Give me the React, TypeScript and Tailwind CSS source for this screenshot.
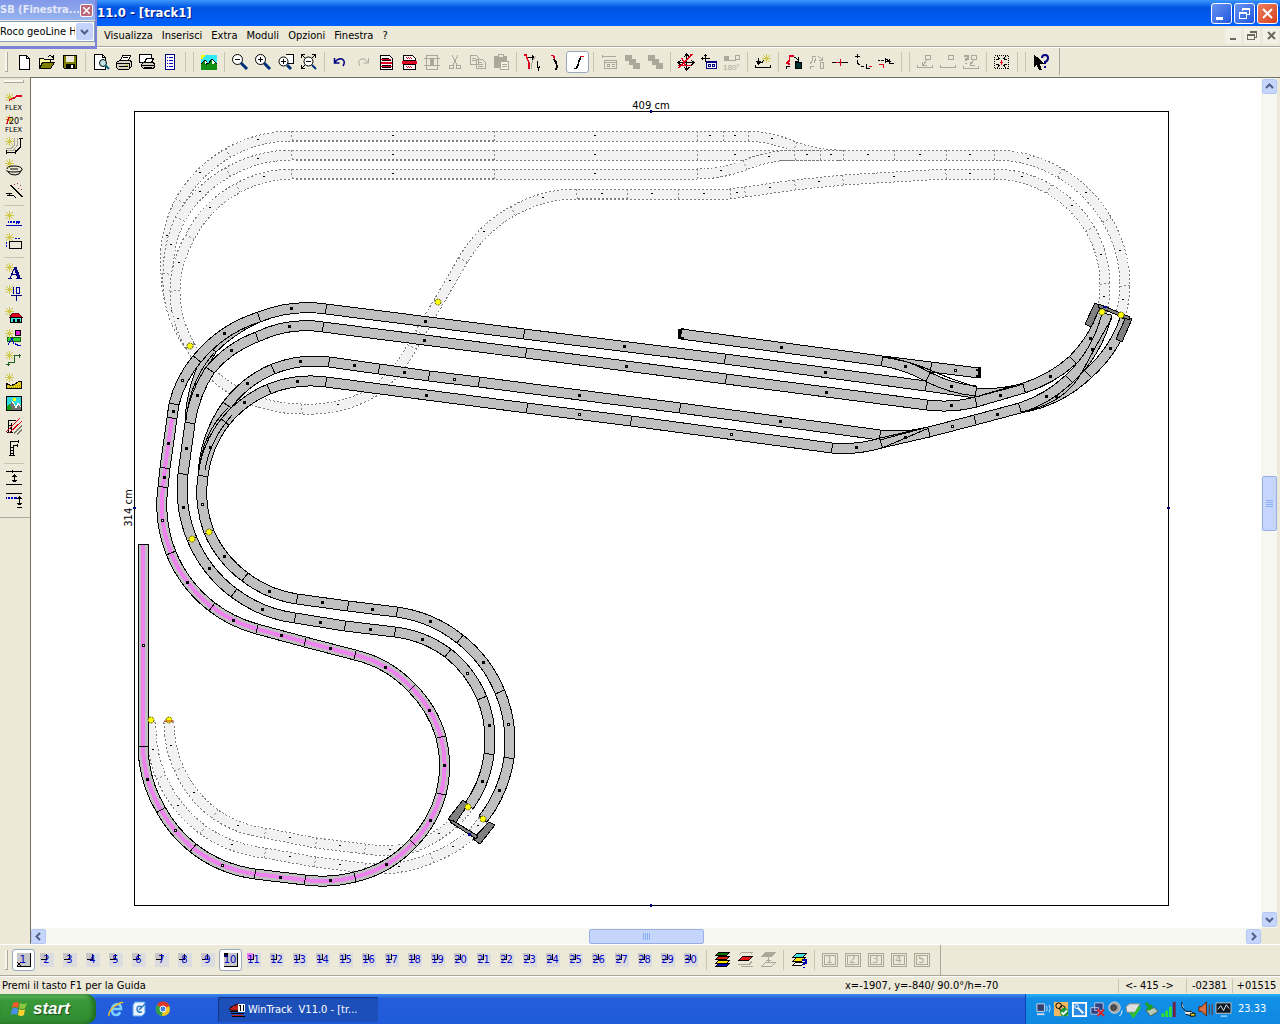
import { FC, ReactNode } from "react";

// One piece of track: end point and radius (0 = straight, + = clockwise, - = counter clockwise),
// a trailing 1 marks a piece whose centre is drawn hollow
type Piece = [number, number, number, number?];

interface Track {
    kind: "ghost" | "rail" | "pink",
    start: [number, number],
    pieces: Piece[]
}

interface Tool {
    name: string,
    icon: ReactNode,
    active?: boolean
}

const tracks: Track[] = [
    // hidden tracks, upper level
    { kind: "ghost", start: [190, 346], pieces: [[166, 274, 131], [180, 201, 131], [228, 153, 131], [292, 136, 131], [494, 136, 0], [697, 136, 0], [723, 136, 0], [748, 136, 0], [795, 147, 131], [843, 155, -131]] },
    { kind: "ghost", start: [190, 346], pieces: [[168, 274, 110], [180, 219, 131], [228, 172, 131], [292, 155, 131], [494, 155, 0], [697, 155, 0], [773, 155, 0], [820, 155, 0], [843, 155, 0], [894, 155, 0], [946, 155, 0], [994, 155, 0], [1060, 173, 131], [1107, 220, 131], [1125, 286, 131], [1121, 314, 131]] },
    { kind: "ghost", start: [190, 346], pieces: [[175, 291, 112], [190, 237, 112], [238, 188, 112], [292, 174, 112], [494, 174, 0], [697, 174, 0], [745, 165, -131], [795, 155, 131], [820, 155, 0]] },
    { kind: "ghost", start: [190, 346], pieces: [[208, 370, -130], [302, 409, -130], [372, 393, -130], [412, 347, -130], [420, 333, 0], [438, 303, 0], [463, 260, 0], [513, 211, 131], [577, 194, 131], [627, 194, 0], [678, 194, 0], [730, 194, 0], [745, 192, 0], [795, 185, 0], [843, 180, 0], [946, 174, 0], [994, 174, 0], [1049, 189, 111], [1090, 229, 111], [1105, 284, 111], [1102, 311, 111]] },
    // hidden tracks, lower level
    { kind: "ghost", start: [169, 722], pieces: [[179, 769, -112], [215, 814, -112], [265, 833, -112], [316, 843, 0], [365, 849, 0], [415, 847, -131], [460, 817, -131], [469, 806, -131]] },
    { kind: "ghost", start: [151, 722], pieces: [[161, 777, -131], [203, 830, -131], [265, 853, -131], [315, 862, 0], [365, 868, 0], [432, 858, -131], [473, 833, -131], [483, 820, -131]] },
    // station
    { kind: "rail", start: [190, 423], pieces: [[212, 349, 150], [259, 317, 150]] },
    { kind: "rail", start: [172, 418], pieces: [[174, 404, 0], [197, 359, 112, 1], [259, 317, 131], [326, 309, 131], [524, 334, 0], [725, 359, 0], [926, 386, 0], [975, 393, 0], [1024, 388, -131]] },
    { kind: "rail", start: [681, 334], pieces: [[882, 361, 0], [931, 367, 0], [979, 373, 0, 1]] },
    { kind: "rail", start: [882, 361], pieces: [[928, 377, 131], [976, 391, -131]] },
    { kind: "rail", start: [469, 806], pieces: [[489, 754, -112], [482, 698, -112], [448, 653, -112, 1], [395, 632, -112], [345, 626, 0], [295, 618, 0], [234, 593, 131], [192, 539, 131], [183, 474, 131], [190, 423, 0], [210, 370, 131], [257, 337, 112], [323, 327, 112], [526, 353, 0], [726, 379, 0], [927, 405, 0], [976, 402, -131], [1024, 388, 0], [1073, 360, -131], [1103, 313, -131]] },
    { kind: "rail", start: [203, 476], pieces: [[227, 405, 131], [273, 369, 112], [329, 362, 112], [379, 369, 0], [429, 376, 0], [479, 382, 0, 1], [680, 408, 0], [880, 435, 0], [928, 432, -131]] },
    { kind: "rail", start: [483, 819], pieces: [[509, 758, -131], [500, 692, -131, 1], [460, 639, -131], [397, 612, -131], [348, 606, 0], [297, 599, 0], [245, 577, 112], [209, 532, 112], [203, 476, 112, 1], [225, 422, 112], [269, 389, 112], [326, 382, 112], [527, 408, 0], [631, 421, 0, 1], [832, 448, 0, 1], [881, 443, -131], [929, 432, 0], [975, 420, 0, 1], [1020, 408, 0], [1088, 374, -131], [1125, 319, -131]] },
    { kind: "rail", start: [1020, 408], pieces: [[1069, 379, -131], [1107, 314, -131]] },
    // highlighted layer
    { kind: "pink", start: [143, 544], pieces: [[143, 746, 0, 1], [161, 810, -129], [193, 848, -129, 1], [255, 874, -129, 1], [305, 880, 0], [355, 877, -131], [413, 843, -114], [441, 794, -114], [441, 737, -114], [412, 688, -114], [355, 655, -114], [305, 642, 0], [257, 629, 0], [212, 607, 131], [171, 553, 131], [163, 487, 131, 1], [165, 468, 0], [172, 418, 0]] }
]

const markers = [[190, 346], [438, 302], [192, 539], [209, 532], [151, 720], [169, 720], [468, 807], [483, 819], [1102, 312], [1121, 315]]

const trackGeometry = (track: Track) => {
    let [x, y] = track.start;
    let d = `M${x} ${y}`;
    let ticks = "";
    const dots: { x: number, y: number, hollow: boolean }[] = [];

    track.pieces.forEach(([nx, ny, r, hollow], i) => {
        const chord = Math.hypot(nx - x, ny - y);
        const dir = Math.atan2(ny - y, nx - x);
        const half = r === 0 ? 0 : Math.asin(chord / 2 / r);
        const sag = r === 0 ? 0 : r * (1 - Math.cos(half));
        d += r === 0 ? `L${nx} ${ny}` : `A${Math.abs(r)} ${Math.abs(r)} 0 0 ${r > 0 ? 1 : 0} ${nx} ${ny}`;

        const tick = (px: number, py: number, a: number) => {
            const dx = -Math.sin(a) * 5;
            const dy = Math.cos(a) * 5;
            ticks += `M${px - dx} ${py - dy}L${px + dx} ${py + dy}`;
        }
        if (i === 0) tick(x, y, dir - half);
        tick(nx, ny, dir + half);
        dots.push({
            x: Math.floor((x + nx) / 2 + Math.sin(dir) * sag),
            y: Math.floor((y + ny) / 2 - Math.cos(dir) * sag),
            hollow: hollow === 1
        });
        x = nx;
        y = ny;
    });
    return { d, ticks, dots };
}

const TrackShape: FC<{ track: Track }> = ({ track }) => {
    const { d, ticks, dots } = trackGeometry(track);
    const ghost = track.kind === "ghost";
    return (
        <g fill="none" shapeRendering="crispEdges">
            <path d={d} stroke={ghost ? "#7c7c7c" : "#000"} strokeWidth="11" strokeDasharray={ghost ? "2 2" : undefined} />
            <path d={d} stroke={ghost ? "#f2f2f2" : "#c0c0c0"} strokeWidth="9" />
            {track.kind === "pink" && <path d={d} stroke="#ee82ee" strokeWidth="4" />}
            <path d={ticks} stroke={ghost ? "#8c8c8c" : "#000"} strokeDasharray={ghost ? "2 2" : undefined} />
            {
                dots.map((dot, id) => (
                    <g key={id}>
                        <rect x={dot.x - 1} y={dot.y - 1} width={ghost ? 2 : 3} height={ghost ? 1 : 3} fill="#000" />
                        {dot.hollow && <rect x={dot.x} y={dot.y} width="1" height="1" fill="#fff" />}
                    </g>
                ))
            }
        </g>
    );
}

const Plan = () => (
    <svg viewBox="31 78 1230 850" className="block w-full h-auto" role="img" aria-label="track1">
        <g shapeRendering="crispEdges">
            <rect x="134.5" y="111.5" width="1034" height="794" fill="none" stroke="#000" />
            <path d="M650 110h2v3h-2zM650 904h2v3h-2zM1167 507h3v2h-3zM133 507h3v2h-3z" fill="#000080" />
        </g>
        <text x="651" y="109" textAnchor="middle" className="text-[10px] font-['DejaVu_Sans',sans-serif]">409 cm</text>
        <text transform="translate(132 508) rotate(-90)" textAnchor="middle" className="text-[10px] font-['DejaVu_Sans',sans-serif]">314 cm</text>
        {tracks.map((track, id) => <TrackShape track={track} key={id} />)}
        {/* turnout blades */}
        <g fill="none" stroke="#000" shapeRendering="crispEdges">
            <path d="M882 357Q910 361 930 370T976 387M976 397L1024 384M880 440L928 427M882 448L929 428" />
            <path d="M199 470Q203 432 228 408M205 470Q210 440 232 415M186 420Q190 380 214 353M1021 412Q1065 404 1082 372T1112 318" />
        </g>
        {/* bumpers */}
        <path d="M678 329h3v10h-3zM681 328h3v2h-3zM681 337h3v2h-3zM978 367h3v11h-3zM976 369h2v2h-2zM976 375h2v2h-2z" fill="#000" shapeRendering="crispEdges" />
        {/* tunnel portals */}
        <g fill="#808080" stroke="#000" shapeRendering="crispEdges">
            <path d="M1095 303L1101 306L1091 327L1085 324ZM1126 317L1132 319L1122 342L1116 339Z" />
            <path d="M1099 304L1130 317L1129 320L1098 307Z" />
            <path d="M463 800L468 804L455 824L448 819ZM489 822L495 825L480 844L473 839Z" />
            <path d="M452 820L478 836L476 839L450 822Z" />
        </g>
        <path d="M1103 306h4v2h-4zM468 833h3v3h-3z" fill="#000080" />
        {
            markers.map(([x, y], id) => (
                <circle key={id} cx={x} cy={y} r="3" fill="#ffff00" stroke="#5a5a00" strokeDasharray="2 1" />
            ))
        }
        <path d="M164 721h10" stroke="#c03000" />
    </svg>
)

const Glyph: FC<{ children?: ReactNode }> = ({ children }) => (
    <svg width="18" height="18" viewBox="0 0 18 18" fill="none" stroke="#000" shapeRendering="crispEdges" aria-hidden="true">{children}</svg>
)

const Spark = () => <path d="M4.500 0v9M0 4.500h9M1 1l7 7M8 1l-7 7" stroke="#cfc64c" />

const gray = "#aca899";

const magnifier = <><circle cx="6.500" cy="6.500" r="5" fill="#fff" shapeRendering="auto" /><path d="M10 10l6 6" stroke="#00307c" strokeWidth="3" shapeRendering="auto" /></>

const toolGroups: Tool[][] = [
    [
        { name: "Nuovo", icon: <path d="M4.500 2.500h7l3 3v11h-10zM11.500 2.500v3h3" fill="#fff" /> },
        { name: "Apri", icon: <><path d="M1.500 14.500v-9h4l1 1h6v3" fill="#ffffa0" /><path d="M1.500 15.500l3-6h12l-4 6z" fill="#808000" /><path d="M10 4q3-3 5 1M15 2v4h-4" /></> },
        { name: "Salva", icon: <><path d="M2.500 2.500h13v13h-12l-1-1z" fill="#808000" /><path d="M5 3h8v6H5z" fill="#ece9d8" stroke="none" /><path d="M5 11h8v4H5z" fill="#000" /><path d="M10 12h2v3h-2z" fill="#fff" stroke="none" /></> }
    ],
    [
        { name: "Anteprima", icon: <><path d="M2.500 1.500h8l3 3v12h-11zM10.500 1.500v3h3" fill="#fff" /><circle cx="11" cy="10" r="3.500" fill="#bfe6e6" shapeRendering="auto" /><path d="M13 12l4 4" stroke="#006080" strokeWidth="2" shapeRendering="auto" /></> },
        { name: "Stampa", icon: <><path d="M5.500 7.500l2-5h8l-2 5" fill="#fff" /><path d="M1.500 9.500l3-2h11l1 2v4l-3 3h-10l-2-2z" fill="#d6d3c4" /><path d="M2 10.500h12M4 13.500h9M14 10v6M8 4.500h5" /><path d="M11 12h2" stroke="#c0c000" /></> },
        { name: "Stampa vista", icon: <><path d="M1.500 1.500h12v8h-12z" fill="#fff" /><path d="M8.500 5.500h7l-2 4h-7z" fill="#fff" /><path d="M5.500 9.500h10l1 2v3l-2 1h-9l-2-2v-2z" fill="#d6d3c4" /><path d="M4 12.500h12M6 14.500h8" /></> },
        { name: "Lista", icon: <><path d="M4.500 1.500h9v15h-9z" fill="#fff" stroke="#000080" /><path d="M6 4.500h1M8 4.500h4M6 7.500h1M8 7.500h4M6 10.500h1M8 10.500h4M6 13.500h1M8 13.500h4" stroke="#0000c0" /></> }
    ],
    [],
    [
        { name: "Paesaggio", icon: <><path d="M1 2h16v10H1z" fill="#30e8f8" stroke="none" /><path d="M1 11l4-3 3 2 4-4 5 5v6H1z" fill="#109010" stroke="none" /><path d="M1 11l4-4 3 4 4-5 5 5M5 7l2 5M12 6l1 5" /><path d="M5 8l2 2-2 1zM12 7l3 3-3 1z" fill="#fff" stroke="none" /><path d="M1 2h4v2H3v2H1z" fill="#ff0" stroke="none" /></> }
    ],
    [
        { name: "Zoom indietro", icon: <>{magnifier}<path d="M4 6.500h5" /></> },
        { name: "Zoom avanti", icon: <>{magnifier}<path d="M4 6.500h5M6.500 4v5" /></> },
        { name: "Zoom finestra", icon: <><path d="M8.500 1.500h8v9h-8" fill="#fff" /><circle cx="6.500" cy="8.500" r="4.500" fill="#fff" shapeRendering="auto" /><path d="M4 8.500h5M6.500 6v5" /><path d="M10 12l4 4" stroke="#00307c" strokeWidth="3" shapeRendering="auto" /></> },
        { name: "Zoom tutto", icon: <><path d="M1.500 5V1.500h3M12 1.500h3.500V5M1.500 12v3.500h3M2 2l3 3M15 2l-3 3M2 15l3-3" /><circle cx="8.500" cy="8.500" r="4.500" fill="#fff" shapeRendering="auto" /><path d="M6 8.500h5" /><path d="M12 12l4 4" stroke="#00307c" strokeWidth="2" shapeRendering="auto" /></> }
    ],
    [
        { name: "Annulla", icon: <path d="M3.500 5v5h5M4 9q3-4 7-3 4 2 1 7" stroke="#000080" shapeRendering="auto" strokeWidth="1.500" /> },
        { name: "Ripristina", icon: <path d="M14.500 5v5h-5M14 9q-3-4-7-3-4 2-1 7" stroke={gray} shapeRendering="auto" /> },
        { name: "Elimina", icon: <><path d="M3.500 2.500h9l3 3v11h-12z" fill="#fff" /><path d="M5 5.500h7M5 7.500h9M5 12.500h9M5 14.500h9" /><path d="M4 9h11v2H4z" fill="#e00020" stroke="none" /><path d="M4 6.500h10M4 13.500h11" stroke="#e00020" /></> },
        { name: "Dividi", icon: <><path d="M3.500 2.500h9l3 3v11h-12z" fill="#fff" /><path d="M6 4h5M7 5.500h5M6 13h6M7 14.500h5" strokeDasharray="1 1" stroke="#e00020" /><path d="M2 9.500h15" stroke="#e00020" strokeWidth="3" /><path d="M4 7.500h11M4 11.500h11" /></> },
        { name: "Unisci", icon: <><path d="M3.500 2.500h11v14h-11zM1 5.500h16M1 12.500h16" stroke={gray} /><path d="M7 6h4v6H7z" fill={gray} stroke="none" /></> },
        { name: "Taglia", icon: <path d="M6 2l5 10M12 2L7 12M3.500 12.500h4v3h-4zM10.500 12.500h4v3h-4z" stroke={gray} /> },
        { name: "Copia", icon: <path d="M1.500 2.500h6l2 2v7h-8zM7.500 6.500h6l3 3v6h-9zM3 5.500h4M3 7.500h4M9 9.500h4M9 11.500h5M9 13.500h5" stroke={gray} /> },
        { name: "Incolla", icon: <><path d="M2 3h13v12H2z" fill={gray} stroke="none" /><path d="M6 1.500h5v3H6z" fill="#ece9d8" stroke={gray} /><path d="M8.500 8.500h8v8h-8zM10 11.500h5M10 13.500h5" fill="#f4f2e6" stroke={gray} /></> }
    ],
    [
        { name: "Binario flessibile", icon: <><path d="M1 2h2l1 3 2 5v6" stroke="#e00020" strokeWidth="1.500" /><path d="M5 4.500h6M9 2.500l2 2-2 2M14.500 8v5l1 3 1-3" /><path d="M13 3q-5 5-5 13" stroke={gray} /></> },
        { name: "Curva", icon: <><path d="M5 2.500h2l2 3" stroke="#e00020" strokeWidth="1.500" /><path d="M8 6q4 5 2 11" strokeWidth="2" /></> },
        { name: "Curva di raccordo", active: true, icon: <><path d="M5 15.500h2l2-3 1-5 2-3" strokeWidth="1.500" /><path d="M11 3.500h4" stroke="#e00020" strokeWidth="1.500" /></> }
    ],
    [
        { name: "Etichetta", icon: <path d="M2.500 2v3M2 3.500h14M4.500 7.500h12v8h-12zM5 9.500h11M7.500 11.500h2v2h-2zM12 11.500h3M12 13.500h3" stroke={gray} /> },
        { name: "Porta avanti", icon: <path d="M2 2h6v5H2zM6 6h6v5H6zM10 10h6v5h-6z" fill={gray} stroke={gray} /> },
        { name: "Porta indietro", icon: <path d="M2 2h6v5H2zM6 6h6v5H6zM10 10h6v5h-6z" fill={gray} stroke={gray} /> }
    ],
    [
        { name: "Sposta", icon: <><path d="M1 9.500h16M9.500 2v14M4 7l-3 2.500 3 3M14 7l3 2.500-3 3M7 4l2.500-3 3 3M7 14l2.500 3 3-3" /><path d="M1 12.500h13M2 15L15 1M5 5l3 7" stroke="#e00020" strokeWidth="1.500" /></> },
        { name: "Sposta testo", icon: <><path d="M1 5.500h9M5.500 1v8M2.500 4v3M4 2.500h3" /><path d="M6.500 8.500h10v7h-10z" fill="#fff" stroke="#000080" /><path d="M7 9.500h9" stroke="#000080" /><path d="M8.500 11.500h2v2h-2zM12.500 11.500h2v2h-2z" stroke="#000080" /></> },
        { name: "Ruota 180", icon: <><path d="M1 3h4v4H1z" fill={gray} stroke={gray} /><path d="M6 7.500h6v-5h4v4h-4" stroke={gray} /><text x="0" y="17" fill={gray} stroke="none" className="text-[8px] font-['Liberation_Sans',sans-serif]">180°</text></> }
    ],
    [
        { name: "Altezza", icon: <><path d="M1.500 12v2.500h15V12M4.500 5v5" /><path d="M2 8h5l-2.500 3z" fill="#000" /><path d="M6 9.500h2l2-2" /><path d="M12.500 1v9M8 5.500h9M9 2l7 7M16 2l-7 7" stroke="#cfc64c" /></> }
    ],
    [
        { name: "Inserisci tratto", icon: <><path d="M2 11l2-3 1-5h4M2 9l3 3" stroke="#e00020" strokeWidth="1.500" /><path d="M10.500 9.500h6v6h-6z" fill="#003030" /><path d="M1.500 16v-3h3M9 4l5 3M13 4v4h-3" /></> },
        { name: "Sostituisci", icon: <path d="M2 11l2-3 1-5h3M6 10l2-5M12.500 9.500h3v6h-3zM2.500 16v-3h3M10 3l4 4M14 4v3h-3" stroke={gray} fill="none" /> },
        { name: "Connetti", icon: <><path d="M1 9.500h16" /><path d="M9.500 6v7M5 9.500h3" stroke="#e00020" /></> },
        { name: "Chiudi curva", icon: <><path d="M3.500 1v4M1 3.500h5M3.500 7v3l2 2M7 13.500h3M12.500 11v5M12 15.500h4" strokeWidth="1.500" /><path d="M15 13.500h3" stroke="#e00020" /></> },
        { name: "Chiudi tratto", icon: <><path d="M1 7.500h2M4 7.500h3M8 5l3 2.500L8 10zM11 8.500h3M12.500 6v4h4" /><path d="M2 11.500h4v3" stroke="#e00020" /></> }
    ],
    [],
    [
        { name: "Quota 1", icon: <path d="M9.500 2.500h5v4h-5zM11 7l-4 5M6.500 9v3h4M1.500 12v2.500h15V12" stroke={gray} /> },
        { name: "Quota 2", icon: <path d="M9.500 2.500h5v4h-5zM1.500 12v2.500h15V12" stroke={gray} /> },
        { name: "Quota 3", icon: <><path d="M9.500 2.500h5v4h-5zM12 7l-4 5M8.500 9v3h4M1.500 13v2.500h15V13" stroke={gray} /><path d="M2 3h4v3H4v2M4 10v1" stroke={gray} strokeWidth="1.500" /></> }
    ],
    [
        { name: "Centra", icon: <><path d="M1.500 2.500h14v13h-14z" strokeDasharray="1 1" /><path d="M4 3l2.500 3M13 3l-2.500 3M4 15l2.500-3M13 15l-2.500-3M3 6.500h3M11 6.500h3M3 11.500h3M11 11.500h3" /><path d="M8.500 7v5M7 9.500h3" stroke="#e00020" /></> }
    ],
    [],
    [
        { name: "Guida rapida", icon: <><path d="M2 2v12l3-3 2 5h2l-2-6h4z" fill="#000" /><path d="M10 5q0-3 3-3t3 3-3 4v2M13 13v2" stroke="#000080" strokeWidth="2" shapeRendering="auto" /></> }
    ]
]

const sideGroups: Tool[][] = [
    [
        { name: "Flex", icon: <><Spark /><path d="M4 7l5-2 3-2h5" stroke="#e00020" strokeWidth="1.500" /><text x="0" y="17" fill="#000" stroke="none" className="text-[7px] font-['DejaVu_Sans',sans-serif]">FLEX</text></> },
        { name: "Flex 20", icon: <><Spark /><path d="M2 9l2-7" stroke="#e00020" strokeWidth="1.500" /><g fill="#000" stroke="none" className="text-[8px] font-['DejaVu_Sans',sans-serif]"><text x="4" y="9">20°</text><text x="0" y="17" className="text-[7px]">FLEX</text></g></> },
        { name: "Tratto parallelo", icon: <><Spark /><path d="M9.500 1v7l-3 3H1M12.500 1v7l-4 5H1" stroke={gray} /><path d="M15.500 1v9l-5 5H1M14 1.500h4M1.500 13v4M10.500 13v4" /></> },
        { name: "Elica", icon: <><Spark /><path d="M2 10q0-3 7-3t8 3-8 3-7-2M3 13q2 3 7 3t6-4M5 10h8" shapeRendering="auto" /></> },
        { name: "Bacchetta", icon: <><path d="M1 12.500h5l-3 2h5l3 2" /><path d="M6 4l11 12" strokeWidth="1.500" /><path d="M9 3.500h1M12 2.500h1M15 4.500h1M13 7.500h1M16 8.500h1" stroke="#a03050" /></> }
    ],
    [
        { name: "Quota", icon: <><Spark /><path d="M1 14.500h16" stroke="#0000c0" /><path d="M3 10.500h1M5 10.500h2M8 10.500h2M11 10.500h4M11 11.500h1M13 11.500h1" stroke="#0000c0" strokeWidth="2" /></> },
        { name: "Rettangolo", icon: <><Spark /><path d="M4.500 8.500h12v7h-12z" fill="#ece9d8" /><path d="M1.500 9v6M10 5.500h6" stroke="#0000c0" strokeDasharray="2 1" /></> }
    ],
    [
        { name: "Testo", icon: <><Spark /><path d="M3 15.500h4M11 15.500h6M5 15l5-11" stroke="#000080" /><path d="M10 4l4 11" stroke="#000080" strokeWidth="3" /><path d="M7 11.500h5" stroke="#000080" /></> },
        { name: "Altezza punto", icon: <><Spark /><path d="M8.500 2v7M11.500 2.500h3v6h-3z" stroke="#0000a0" strokeWidth="1.500" /><path d="M6 10.500h11M11.500 11v5" strokeWidth="1.500" stroke="#000080" /></> },
        { name: "Casa", icon: <><Spark /><path d="M5 10l3-4h5l4 4z" fill="#e00020" stroke="#700010" /><path d="M5.500 10.500h11v5h-11z" fill="#40e0e0" /><path d="M8 12h1v2H8zM12 12h2v3h-2z" fill="#000" /></> },
        { name: "Paesaggio", icon: <><path d="M2 8h13v4H2z" fill="#30d030" stroke="#106010" /><Spark /><circle cx="13" cy="4" r="3" fill="#e020d0" /><path d="M3 16l4-7 2 6M10 14q1 3 6 2" stroke="#0000c0" /></> },
        { name: "Percorso", icon: <><Spark /><path d="M3.500 15v-4h6V4.500h6M1 13.500h4M14.500 3v4" stroke="#206020" /></> },
        { name: "Terreno", icon: <><Spark /><path d="M1.500 10.500l4 2 4-1 4-3h3v7h-15z" fill="#e8d020" /><path d="M2 14.500h14M4 12.500h12" stroke="#a09000" strokeDasharray="1 1" /></> },
        { name: "Vista 3D", icon: <><path d="M1.500 1.500h15v14h-15z" fill="#30d8e0" /><path d="M2 15l5-9 4 6 2-4 3 3v4z" fill="#707070" stroke="none" /><path d="M7 6l2 3 2 4 2-5 3 4" stroke="#fff" /><path d="M2 11l3-2 2 6H2z" fill="#10a010" stroke="none" /><path d="M8 3h3v3H8z" fill="#ff0" stroke="none" /></> },
        { name: "Ponte", icon: <><path d="M3.500 16V3.500h7M6.500 16V6M3 8.500h3M3 11.500h3M2 15.500h6" /><path d="M1 15L15 1M4 16L17 4" stroke="#e00020" /><path d="M9 16l8-7M12 17l5-4" stroke="#7c7a6c" strokeWidth="1.500" /></> },
        { name: "Pilone", icon: <path d="M5.500 17V2.500h8M8.500 17V6.500h4M13.500 1v3M5 8.500h4M5 11.500h4M5 14.500h4M4 16.500h6M12.500 5v3" /> }
    ],
    [
        { name: "Distanza", icon: <path d="M1 2.500h16M1 15.500h16M7.500 1v3M9.500 5v8M7 7.500h5M7 11.500h5M8 6.500h3M8 12.500h3" /> },
        { name: "Quota verticale", icon: <><path d="M1 2.500h16M14.500 5v9M12 7.500h5M12 12.500h5M13 6.500h3M13 13.500h3M12 16.500h5" /><path d="M1 6.500h1M3 6.500h2M6 6.500h2M9 6.500h3" stroke="#0000c0" strokeWidth="2" /></> }
    ]
]

const menus = ["Visualizza", "Inserisci", "Extra", "Moduli", "Opzioni", "Finestra", "?"]

const layers = Array.from({ length: 30 }, (_, i) => i + 1)

const ToolButton: FC<{ tool: Tool }> = ({ tool }) => (
    <button type="button" aria-label={tool.name} className={`flex items-center justify-center w-[23px] h-[22px] shrink-0 ${tool.active ? "bg-white border border-[#98a8bd] rounded-[3px]" : ""}`}>
        <Glyph>{tool.icon}</Glyph>
    </button>
)

const Divider = () => (
    <div className="w-2 h-[22px] shrink-0 flex justify-center"><span className="w-px h-5 self-center bg-[#c8c5b2]" /></div>
)

const Grip = () => <span className="w-[3px] h-5 shrink-0 mr-1 border-r border-b border-[#aca899] bg-[#f8f7f0]" />

const FloatingPanel = () => (
    <div className="absolute left-0 top-0 z-10 w-[97px] h-[49px] bg-[#ece9d8] border-r-2 border-b-[3px] border-[#7b83d8] text-[11px]">
        <div className="flex items-center justify-between h-5 pr-[2px] bg-linear-to-b from-[#8298e8] to-[#98b4ef]">
            <span className="text-[11px] font-bold text-[#e4e8f8] whitespace-nowrap">SB (Finestra...</span>
            <button type="button" aria-label="Chiudi" className="flex items-center justify-center w-[13px] h-[13px] rounded-[2px] border border-white bg-[#b9697a]">
                <svg width="7" height="7" viewBox="0 0 7 7" stroke="#fff" strokeWidth="1.500"><path d="M0 0l7 7M7 0L0 7" /></svg>
            </button>
        </div>
        <div className="relative mt-px flex h-[21px] border border-[#7f9db9] border-l-0 bg-white">
            <select aria-label="Sistema binari" className="appearance-none w-[75px] h-full overflow-hidden text-[11px] bg-white outline-none whitespace-nowrap">
                <option>Roco geoLine H0</option>
            </select>
            <span className="flex items-center justify-center w-[17px] my-px ml-px rounded-[2px] bg-[#c3d3fb] pointer-events-none">
                <svg width="9" height="6" viewBox="0 0 9 6" fill="none" stroke="#4d6185" strokeWidth="2"><path d="M1 1l3.500 3.500L8 1" /></svg>
            </span>
        </div>
    </div>
)

const TitleBar = () => (
    <div className="flex items-center h-[26px] shrink-0 pl-[97px] pr-[2px] bg-linear-to-b from-[#3c96ff] via-[#0053e1] via-30% to-[#0061fd]">
        <h1 className="grow text-[13px] font-bold text-white whitespace-nowrap [text-shadow:1px_1px_#00137f]">11.0 - [track1]</h1>
        <div className="flex gap-[2px]">
            <button type="button" aria-label="Riduci a icona" className="w-[21px] h-[21px] rounded-[3px] border border-white bg-linear-to-br from-[#6a92f2] to-[#1f55dd]">
                <svg width="19" height="19" viewBox="0 0 19 19"><path d="M4 13h7v3H4z" fill="#fff" /></svg>
            </button>
            <button type="button" aria-label="Ripristina" className="w-[21px] h-[21px] rounded-[3px] border border-white bg-linear-to-br from-[#6a92f2] to-[#1f55dd]">
                <svg width="19" height="19" viewBox="0 0 19 19" fill="none" stroke="#fff" shapeRendering="crispEdges"><path d="M7.500 7V4.500h7v6H12M7 5.500h8M4.500 8.500h7v6h-7zM4 9.500h8" /></svg>
            </button>
            <button type="button" aria-label="Chiudi" className="w-[21px] h-[21px] rounded-[3px] border border-white bg-linear-to-br from-[#ec7c5c] to-[#d8401a]">
                <svg width="19" height="19" viewBox="0 0 19 19" stroke="#fff" strokeWidth="2"><path d="M5 5l9 9M14 5l-9 9" /></svg>
            </button>
        </div>
    </div>
)

const MenuBar = () => (
    <div className="flex items-center justify-between h-[21px] shrink-0 pl-[104px] pr-px pb-px border-b border-[#aca899]">
        <nav className="flex gap-[9px]">
            {
                menus.map((menu) => (
                    <button type="button" key={menu}>{menu}</button>
                ))
            }
        </nav>
        <div className="flex gap-[3px]">
            <button type="button" aria-label="Riduci documento" className="w-4 h-4 bg-[#f3f1e7]">
                <svg width="16" height="16" viewBox="0 0 16 16"><path d="M5 10h6v2H5z" fill="#6b6a5a" /></svg>
            </button>
            <button type="button" aria-label="Ripristina documento" className="w-4 h-4 bg-[#f3f1e7]">
                <svg width="16" height="16" viewBox="0 0 16 16" fill="none" stroke="#6b6a5a" shapeRendering="crispEdges"><path d="M6 3.500h7M6 4.500h7M12.500 4v5H11M4 7.500h6M3.500 6.500h7v5h-7z" /></svg>
            </button>
            <button type="button" aria-label="Chiudi documento" className="w-4 h-4 bg-[#f3f1e7]">
                <svg width="16" height="16" viewBox="0 0 16 16" stroke="#6b6a5a" strokeWidth="2"><path d="M5 4l7 7M12 4l-7 7" /></svg>
            </button>
        </div>
    </div>
)

const ScrollArrow: FC<{ name: string, d: string }> = ({ name, d }) => (
    <button type="button" aria-label={name} className="flex items-center justify-center w-[15px] h-[15px] shrink-0 rounded-[2px] border border-[#b4c8f6] bg-[#c5d5fc]">
        <svg width="9" height="9" viewBox="0 0 9 9" fill="none" stroke="#4d6185" strokeWidth="2"><path d={d} /></svg>
    </button>
)

const LayerBar = () => (
    <div className="flex items-center h-8 shrink-0 pl-[5px] border-t border-white border-b border-b-[#aca899]">
        <Grip />
        {
            layers.map((n) => (
                <button type="button" key={n} className={`flex items-center justify-center w-[23px] h-[22px] shrink-0 ${n === 1 || n === 10 ? "bg-white border border-[#98a8bd] rounded-[3px]" : ""}`}>
                    <span className={`relative flex items-center justify-center w-[14px] h-[14px] text-[11px] text-[#0000c8] ${n === 1 || n === 10 ? "bg-[#c6c6c6] border-r border-b border-black" : "bg-[#dcdbe0]"}`}>
                        <svg width="14" height="14" viewBox="0 0 14 14" className="absolute left-0 top-0" stroke="#000" shapeRendering="crispEdges" aria-hidden="true">
                            {n === 1 && <path d="M0 9l4 4M4 9l-4 4" />}
                            {n === 10 && <path d="M0 0h3v3H0z" fill="#000" />}
                            {n > 1 && n !== 10 && <path d="M0 0h6v6H0z" fill={n === 11 ? "#ee82ee" : "#c6c6c6"} stroke="none" />}
                            {n > 1 && n !== 10 && <path d="M1 6.500h6M6.500 1v6" />}
                        </svg>
                        <span className="relative">{n}</span>
                    </span>
                </button>
            ))
        }
        <Divider />
        <ToolButton tool={{ name: "Tutti i livelli", icon: <><path d="M2.500 15.500l3-3h11l-3 3z" fill="#0000b0" /><path d="M2.500 12.500l3-3h11l-3 3z" fill="#ffe000" /><path d="M2.500 8.500l3-3h11l-3 3z" fill="#e02010" /><path d="M2.500 4.500l3-3h11l-3 3z" fill="#107010" /></> }} />
        <ToolButton tool={{ name: "Livello attivo", icon: <><path d="M2.500 4.500l3-3h11l-2 2M2 13.500h11l3-3M5 15.500h12" stroke={gray} /><path d="M2.500 9.500l4-4h10l-4 4z" fill="#e81010" /></> }} />
        <ToolButton tool={{ name: "Livello sotto", icon: <><path d="M2.500 5.500l4-4h10l-4 4z" fill={gray} stroke={gray} /><path d="M9.500 6v5M7 9.500h5M2.500 15.500l4-4h10l-4 4z" stroke={gray} /></> }} />
        <Divider />
        <ToolButton tool={{ name: "Info livelli", icon: <><path d="M2.500 14.500l3-3h9l-3 3z" fill="#fff" /><path d="M2.500 10.500l4-4h9l-4 4z" fill="#ffe000" /><path d="M2.500 6.500l4-4h10l-4 4z" fill="#40e0e0" /><path d="M12 9h4v3h-2v2M14 16v1" stroke="#0000b0" strokeWidth="2" /></> }} />
        <Divider />
        {
            [1, 2, 3, 4, 5].map((n) => (
                <button type="button" disabled key={n} className="flex items-center justify-center w-[23px] h-[22px] shrink-0 text-[11px] text-[#aca899]">
                    <span className="flex items-center justify-center w-4 h-[14px] border-3 border-double border-[#aca899]">{n}</span>
                </button>
            ))
        }
        <span className="self-stretch w-px ml-[7px] bg-[#aca899]" />
    </div>
)

const StatusBar = () => (
    <div className="flex items-center h-[18px] shrink-0 pt-px border-t border-white whitespace-nowrap">
        <span className="grow pl-[2px]">Premi il tasto F1 per la Guida</span>
        <span className="w-[273px]">x=-1907, y=-840/ 90.0°/h=-70</span>
        <span className="w-[68px] pl-[6px] border-l border-[#c8c5b2]">&lt;- 415 -&gt;</span>
        <span className="w-[46px] text-center border-l border-[#c8c5b2]">-02381</span>
        <span className="w-[48px] text-center border-l border-[#c8c5b2]">+01515</span>
    </div>
)

const tray: Tool[] = [
    { name: "Rete wireless", icon: <><path d="M2 3h8v8H2z" fill="#304070" stroke="#d0d8e8" /><path d="M2 14h8" stroke="#d0d8e8" strokeWidth="2" /><path d="M12 5q2 3 0 6M15 4q2 4 0 8" stroke="#d0e0ff" /></> },
    { name: "Antivirus", icon: <><path d="M1 1h15v15H1z" fill="#f0b860" stroke="none" /><circle cx="6" cy="5" r="3" /><circle cx="10" cy="8" r="3" /><circle cx="12" cy="12" r="4.500" fill="#189838" stroke="none" /><path d="M9 12l2 2 4-4" stroke="#fff" strokeWidth="2" /></> },
    { name: "Strumenti", icon: <><path d="M2 2h14v14H2z" fill="#2c8ae0" stroke="#fff" strokeWidth="2" /><path d="M7 7l6 6" stroke="#fff" strokeWidth="2" /><circle cx="6" cy="6" r="2" stroke="#fff" /></> },
    { name: "Rete non connessa", icon: <><path d="M6 2h9v8H6zM2 7h8v7H2z" fill="#304080" stroke="#c0c8e0" /><path d="M9 9l7 7M16 9l-7 7" stroke="#e02020" strokeWidth="2" /></> },
    { name: "Audio", icon: <><circle cx="8" cy="7" r="6" fill="#a0a0a0" stroke="#ddd" /><circle cx="7" cy="7" r="3" fill="#505050" stroke="#333" /><path d="M16 10q0 4-3 6" stroke="#fff" /></> },
    { name: "Disco", icon: <><path d="M1 6l4-3h11l-3 5v4H2z" fill="#e0e0e0" stroke="#888" /><path d="M6 12l3 4 7-10" stroke="#30c030" strokeWidth="3" /></> },
    { name: "Rimozione hardware", icon: <><path d="M3 10l9-3 4 4-8 5z" fill="#b8c8b8" stroke="#406040" /><path d="M3 2l5 6M8 8l1-4M8 8l-4 1" stroke="#20a020" strokeWidth="3" /></> },
    { name: "Segnale", icon: <><path d="M2 13v4M6 10v7M10 6v11" stroke="#30e030" strokeWidth="3" /><path d="M14 1v16" stroke="#702040" strokeWidth="3" /></> },
    { name: "Modem", icon: <><path d="M3 1v5l4 5h6l3 3-2 2-7-2" fill="#f0f0f0" /><path d="M12 13h5v3h-5z" fill="#e0e020" /></> },
    { name: "Volume", icon: <><path d="M2 6h3l5-5v15l-5-5H2z" fill="#d87040" stroke="#602010" /><path d="M13 4v10M16 3v12" stroke="#803010" /></> },
    { name: "Monitor", icon: <><path d="M1 2h16v11H1z" fill="#101820" stroke="#c0c8d0" /><path d="M3 9l3-4 3 5 3-6 3 4M6 16h7" stroke="#e8f0ff" /></> }
]

const TaskBar = () => (
    <div className="flex h-[30px] shrink-0 bg-linear-to-b from-[#3f8cf0] via-[#245edb] via-15% to-[#1f5adb] text-white">
        <button type="button" className="flex items-center gap-[5px] w-24 pl-[10px] rounded-r-[10px] bg-linear-to-b from-[#6cc06c] via-[#3a9a3a] via-20% to-[#2f8a2f] shadow-[inset_-3px_0_4px_#1f6a1f]">
            <svg width="18" height="18" viewBox="0 0 18 18" aria-hidden="true">
                <path d="M3 3q3-2 6 0L8 8Q5 6 2 8z" fill="#f05a28" />
                <path d="M10 3q3 2 7 0l-2 5q-3 2-6 0z" fill="#8cc83c" />
                <path d="M2 9q3-2 6 0l-1 6q-3-2-6 0z" fill="#4a90f0" />
                <path d="M9 9q3 2 6 0l-1 6q-3 2-6 0z" fill="#f8d030" />
            </svg>
            <span className="text-[17px] font-bold italic font-['Liberation_Sans',sans-serif] [text-shadow:1px_1px_1px_#1a4a1a]">start</span>
        </button>
        <div className="flex items-center gap-[7px] pl-3 w-[122px]">
            <a href="#ie" aria-label="Internet Explorer">
                <svg width="16" height="16" viewBox="0 0 16 16" fill="none"><path d="M12 11q-1 3-4 3-4 0-4-5t5-6q4 0 4 5H4" stroke="#7cd0ff" strokeWidth="2.500" /><path d="M1 15Q0 10 7 5t8-3" stroke="#f0c030" strokeWidth="1.500" /></svg>
            </a>
            <a href="#desktop" aria-label="Mostra desktop">
                <svg width="16" height="16" viewBox="0 0 16 16" fill="none"><path d="M4 1h10v11l-3 3H2V4z" fill="#eaf4ff" stroke="#5aa0e0" /><path d="M11 6q-5-2-5 2t5 3M8 9l7-7" stroke="#2878c8" strokeWidth="1.500" /></svg>
            </a>
            <a href="#chrome" aria-label="Chrome" className="pl-px">
                <svg width="16" height="16" viewBox="0 0 16 16"><circle cx="8" cy="8" r="7" fill="#f0c820" /><path d="M8 8L2 4a7 7 0 0 1 12.500 1z" fill="#e03828" /><path d="M8 8L2 4a7 7 0 0 0 5 11z" fill="#30a048" /><circle cx="8" cy="8" r="3" fill="#4080e0" stroke="#fff" /></svg>
            </a>
        </div>
        <button type="button" className="flex items-center gap-[2px] w-40 h-[25px] mt-[3px] pl-[10px] rounded-[2px] bg-[#1d4fb8] shadow-[inset_1px_1px_1px_#12357f]">
            <svg width="18" height="18" viewBox="0 0 18 18" shapeRendering="crispEdges" aria-hidden="true">
                <path d="M1 8l4-3 5-2v6H3z" fill="#c02020" stroke="#301010" />
                <path d="M10 3h7v8h-7z" fill="#fff" />
                <path d="M11 4.500h1M12.500 4v6M15.500 4v6M3 12.500h13M4 15.500h13M2 10.500h8" stroke="#000" />
                <path d="M4 14h11" stroke="#c02020" />
            </svg>
            <span className="whitespace-pre">WinTrack  V11.0 - [tr...</span>
        </button>
        <div className="grow" />
        <div className="flex items-center w-[255px] pl-[9px] border-l border-[#1042af] bg-linear-to-b from-[#2cb4f5] via-[#1290e8] via-15% to-[#0f88e0]">
            {
                tray.map((item) => (
                    <button type="button" aria-label={item.name} key={item.name} className="w-[18px]">
                        <svg width="17" height="17" viewBox="0 0 18 18" fill="none" stroke="#000">{item.icon}</svg>
                    </button>
                ))
            }
            <time className="pl-[5px]">23.33</time>
        </div>
    </div>
)

const App = () => {
    return (
        <div className="relative flex flex-col w-full h-screen overflow-hidden bg-[#ece9d8] text-black text-[11px] leading-[14px] font-['DejaVu_Sans_Condensed','DejaVu_Sans',sans-serif]">
            <FloatingPanel />
            <TitleBar />
            <MenuBar />
            <div className="flex items-center h-[30px] shrink-0 pl-[5px] pb-[2px] border-t border-white">
                <Grip />
                {
                    toolGroups.map((group, id) => (
                        <div className="flex" key={id}>
                            {id > 0 && <Divider />}
                            {group.map((tool) => <ToolButton tool={tool} key={tool.name} />)}
                        </div>
                    ))
                }
                <span className="self-stretch w-px ml-[7px] bg-[#aca899]" />
            </div>
            <div className="flex grow min-h-0">
                <div className="flex flex-col w-[30px] shrink-0 border-t border-[#aca899]">
                    <div className="flex flex-col items-center pt-[2px] pb-[6px] pr-[2px] border-b border-[#aca899]">
                        <span className="w-5 h-[3px] mb-2 border-b border-r border-[#aca899] bg-[#f8f7f0]" />
                        {
                            sideGroups.map((group, id) => (
                                <div className="flex flex-col items-center" key={id}>
                                    {id > 0 && <div className="flex items-center w-5 h-2"><span className="w-full h-px bg-[#c8c5b2]" /></div>}
                                    {group.map((tool) => <ToolButton tool={tool} key={tool.name} />)}
                                </div>
                            ))
                        }
                    </div>
                </div>
                <div className="flex flex-col grow min-w-0 border-l border-t border-[#716f64]">
                    <div className="flex grow min-h-0">
                        <main className="grow min-w-0 overflow-hidden bg-white">
                            <Plan />
                        </main>
                        <div className="flex flex-col items-center justify-between w-4 shrink-0 mr-[3px] py-px bg-[#f7f7f1]">
                            <ScrollArrow name="Su" d="M1 6l3.500-3.500L8 6" />
                            <div className="flex flex-col items-center justify-center gap-px w-[15px] h-[55px] rounded-[2px] border border-[#98b0e8] bg-[#c5d5fc]">
                                {[0, 1, 2, 3].map((n) => <span className="w-[7px] h-px bg-[#8cb0f8]" key={n} />)}
                            </div>
                            <ScrollArrow name="Giù" d="M1 3l3.500 3.500L8 3" />
                        </div>
                    </div>
                    <div className="flex items-center justify-between h-4 shrink-0 mr-[19px] bg-[#f7f7f1]">
                        <ScrollArrow name="Sinistra" d="M6 1L2.500 4.500L6 8" />
                        <div className="flex items-center justify-center gap-px w-[115px] h-[15px] rounded-[2px] border border-[#98b0e8] bg-[#c5d5fc]">
                            {[0, 1, 2, 3].map((n) => <span className="w-px h-[7px] bg-[#8cb0f8]" key={n} />)}
                        </div>
                        <ScrollArrow name="Destra" d="M3 1l3.500 3.500L3 8" />
                    </div>
                </div>
            </div>
            <LayerBar />
            <StatusBar />
            <TaskBar />
        </div>
    );
}

export default App;
